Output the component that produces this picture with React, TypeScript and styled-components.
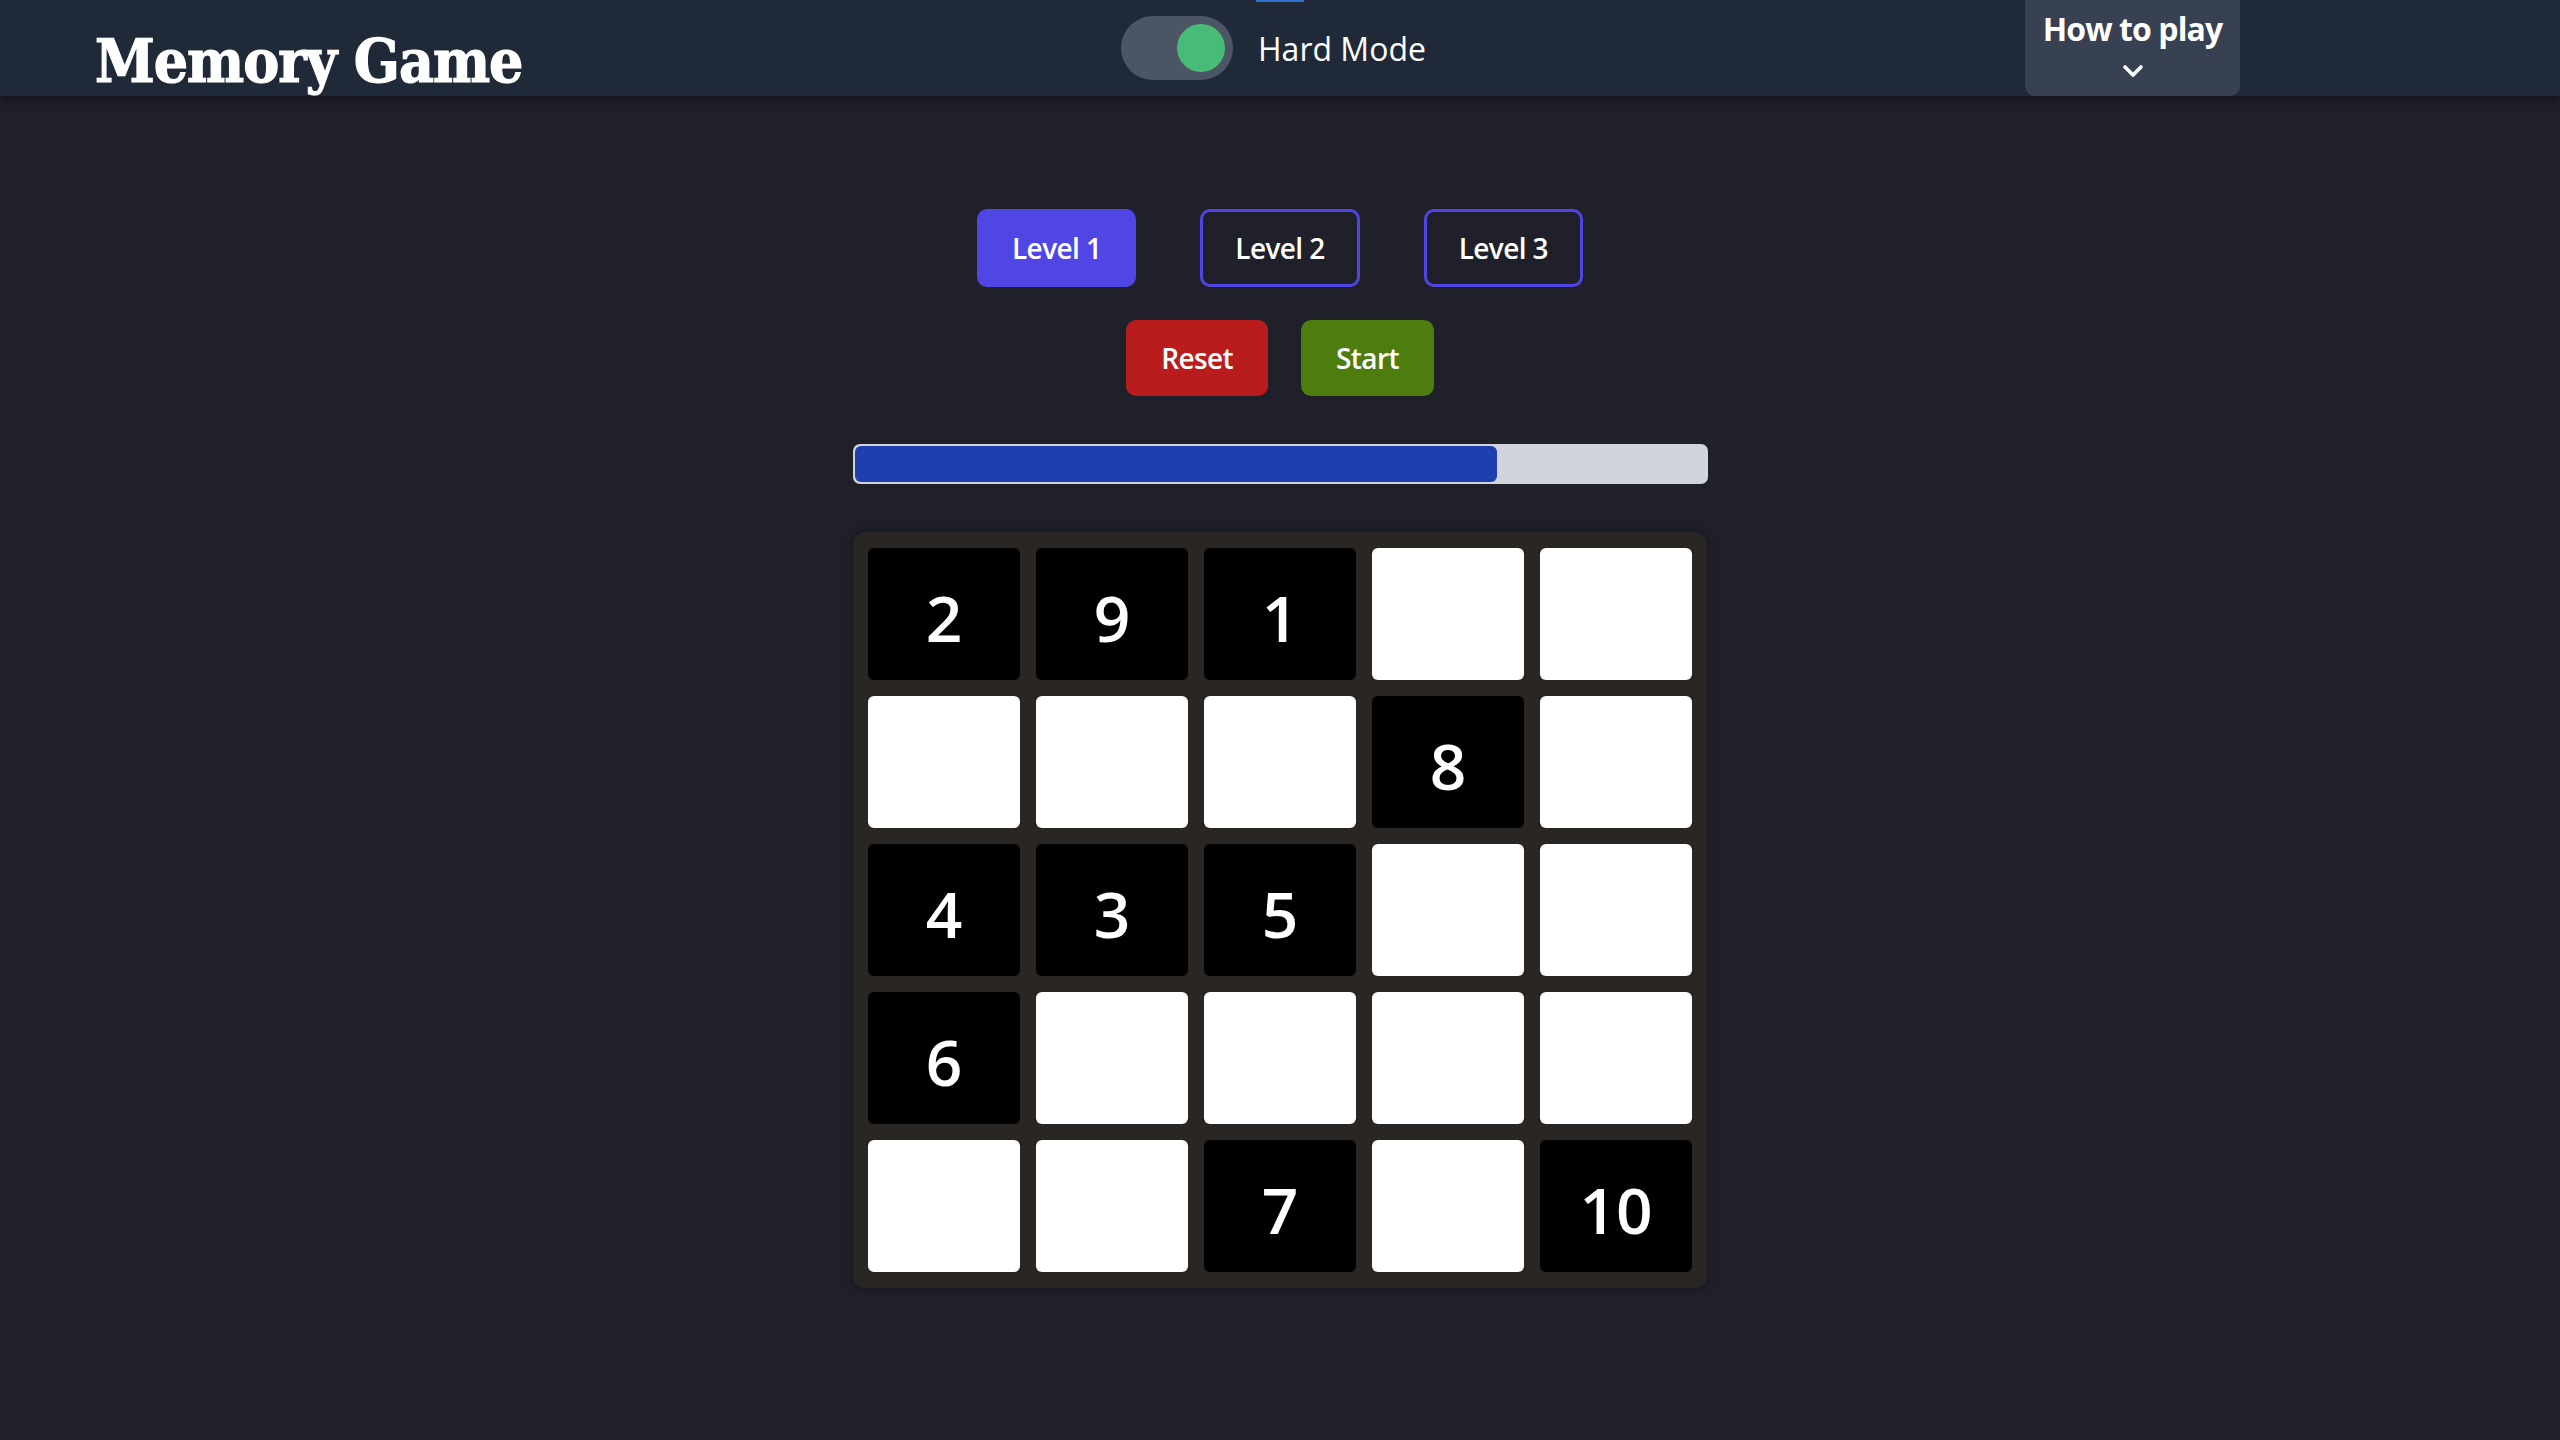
import React from "react";
import styled, { createGlobalStyle } from "styled-components";

const GlobalStyle = createGlobalStyle`
  * { box-sizing: border-box; }
  html, body { margin: 0; padding: 0; }
  body {
    background: #1f2029;
    min-height: 1440px;
    font-family: "Open Sans", "Noto Sans", Arial, sans-serif;
    color: #ffffff;
  }
`;

const Header = styled.header`
  position: relative;
  height: 96px;
  background: #1f2937;
  display: grid;
  grid-template-columns: 1026px 904px 215px;
  padding-left: 95px;
  box-shadow: 0 4px 10px rgba(0, 0, 0, 0.35);
`;

const FocusMark = styled.span`
  position: absolute;
  top: 0;
  left: 1256px;
  width: 48px;
  height: 2px;
  background: #2f6fd6;
`;

const Title = styled.h1`
  margin: 31px 0 0;
  align-self: start;
  font-family: "DejaVu Serif Condensed", "DejaVu Serif", serif;
  font-stretch: semi-condensed;
  font-weight: 700;
  font-size: 60px;
  line-height: 60px;
  letter-spacing: -1px;
  color: #ffffff;
  -webkit-text-stroke: 1.2px #ffffff;
  white-space: nowrap;
`;

const ToggleGroup = styled.div`
  display: flex;
  align-items: center;
  gap: 25px;
`;

const Track = styled.div<{ $on: boolean }>`
  width: 112px;
  height: 64px;
  border-radius: 32px;
  background: #4b5563;
  padding: 8px;
  display: flex;
  justify-content: ${(p) => (p.$on ? "flex-end" : "flex-start")};
`;

const Knob = styled.span`
  width: 48px;
  height: 48px;
  border-radius: 50%;
  background: #48bb78;
`;

const ToggleLabel = styled.span`
  font-size: 32px;
  font-weight: 500;
  color: #ffffff;
`;

const HowTo = styled.div`
  height: 96px;
  background: #374151;
  border-radius: 0 0 10px 10px;
  display: flex;
  flex-direction: column;
  align-items: center;
  padding-top: 10px;
  gap: 17px;
`;

const HowToText = styled.span`
  font-size: 32px;
  font-weight: 700;
  line-height: 37px;
  letter-spacing: -0.9px;
  color: #ffffff;
`;

const Main = styled.main`
  display: flex;
  flex-direction: column;
  align-items: center;
  padding-top: 113px;
`;

const Row = styled.div<{ $gap: number }>`
  display: flex;
  gap: ${(p) => p.$gap}px;
`;

const Button = styled.button<{ $bg: string; $outline?: boolean; $h: number }>`
  height: ${(p) => p.$h}px;
  padding: 0 ${(p) => (p.$outline ? 32 : 35)}px;
  border-radius: 10px;
  border: ${(p) => (p.$outline ? "3px solid #4f46e5" : "none")};
  background: ${(p) => (p.$outline ? "transparent" : p.$bg)};
  color: #ffffff;
  font-family: "Open Sans", "Noto Sans", Arial, sans-serif;
  font-size: 28px;
  font-weight: 650;
  letter-spacing: -0.6px;
  display: flex;
  align-items: center;
  justify-content: center;
`;

const Controls = styled(Row)`
  margin-top: 33px;
`;

const Progress = styled.div`
  margin-top: 48px;
  width: 855px;
  height: 40px;
  border-radius: 7px;
  background: #d1d5db;
  padding: 2px;
`;

const Fill = styled.div`
  height: 100%;
  border-radius: 6px;
  background: #1e40af;
`;

const Board = styled.div`
  margin-top: 48px;
  padding: 16px 15px;
  background: #2a2624;
  border-radius: 12px;
  box-shadow: 0 0 10px rgba(0, 0, 0, 0.35);
  display: grid;
  grid-template-columns: repeat(5, 152px);
  grid-auto-rows: 132px;
  gap: 16px;
`;

const Tile = styled.div<{ $shown: boolean }>`
  border-radius: 6px;
  background: ${(p) => (p.$shown ? "#000000" : "#ffffff")};
  color: #ffffff;
  display: flex;
  align-items: center;
  justify-content: center;
  font-family: "Open Sans", "Noto Sans", Arial, sans-serif;
  font-size: 64px;
  font-weight: 600;
  padding-top: 6px;
`;

const cells: (number | null)[] = [
  2, 9, 1, null, null,
  null, null, null, 8, null,
  4, 3, 5, null, null,
  6, null, null, null, null,
  null, null, 7, null, 10,
];

const Chevron = () => (
  <svg width="24" height="14" viewBox="0 0 24 14" fill="none">
    <polyline
      points="4,3 12,11 20,3"
      stroke="#ffffff"
      strokeWidth="3.6"
      strokeLinecap="round"
      strokeLinejoin="round"
    />
  </svg>
);

export default function App() {
  return (
    <>
      <GlobalStyle />
      <Header>
        <FocusMark />
        <Title>Memory Game</Title>
        <ToggleGroup>
          <Track $on>
            <Knob />
          </Track>
          <ToggleLabel>Hard Mode</ToggleLabel>
        </ToggleGroup>
        <HowTo>
          <HowToText>How to play</HowToText>
          <Chevron />
        </HowTo>
      </Header>
      <Main>
        <Row $gap={64}>
          <Button $bg="#4f46e5" $h={78}>Level 1</Button>
          <Button $bg="#4f46e5" $outline $h={78}>Level 2</Button>
          <Button $bg="#4f46e5" $outline $h={78}>Level 3</Button>
        </Row>
        <Controls $gap={33}>
          <Button $bg="#b91c1c" $h={76}>Reset</Button>
          <Button $bg="#4d7c0f" $h={76}>Start</Button>
        </Controls>
        <Progress>
          <Fill style={{ width: "75.5%" }} />
        </Progress>
        <Board>
          {cells.map((n, i) => (
            <Tile key={i} $shown={n !== null}>
              {n}
            </Tile>
          ))}
        </Board>
      </Main>
    </>
  );
}
